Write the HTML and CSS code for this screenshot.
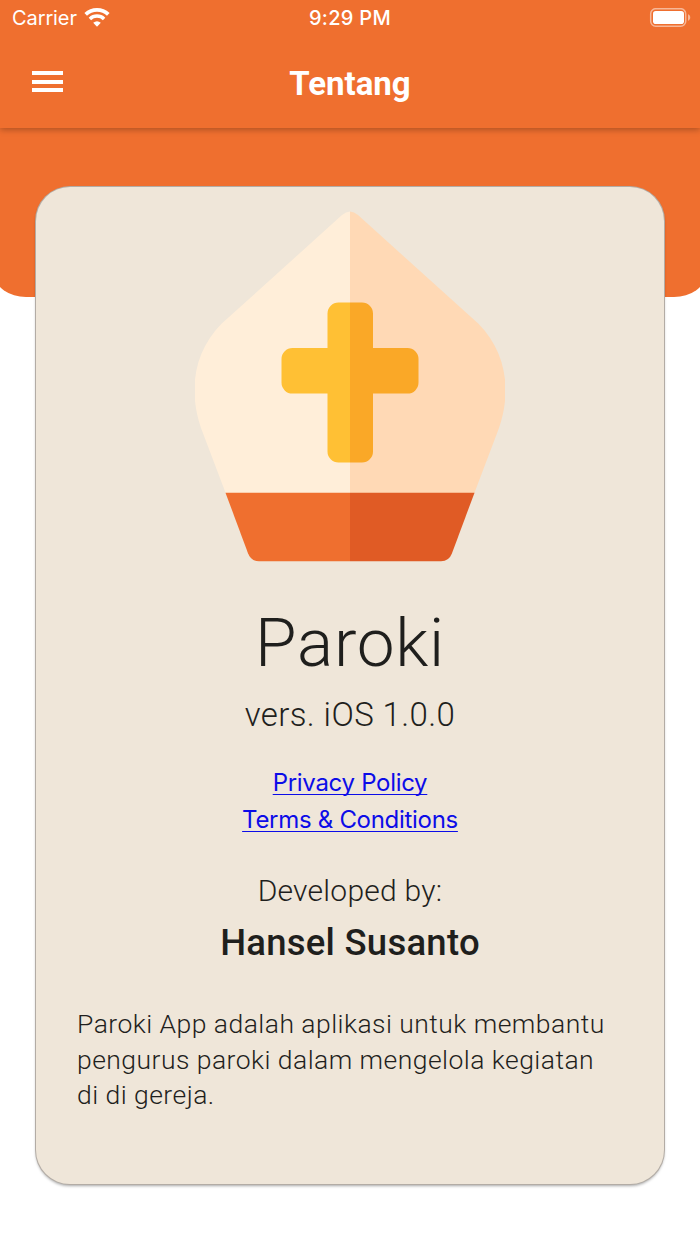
FILE: index.html
```
<!DOCTYPE html>
<html lang="id">
<head>
    <meta charset="UTF-8">
    <title>Tentang</title>
    <link rel="stylesheet" href="styles.css">
</head>
<body>
<div class="page">
    <div class="hero"></div>
    <header class="header">
        <div class="status">
            <div class="carrier">
                <span>Carrier</span>
                <svg class="wifi" width="26" height="20" viewBox="0 0 26 20">
                    <path d="M1.700 6.400a16.500 16.500 0 0 1 22.600 0" fill="none" stroke="#fff" stroke-width="3.8"/>
                    <path d="M5.900 10.900a10.300 10.300 0 0 1 14.200 0" fill="none" stroke="#fff" stroke-width="3.500"/>
                    <path d="M9.200 14.800a5.800 5.800 0 0 1 7.600 0L13 18.700z" fill="#fff"/>
                </svg>
            </div>
            <span class="time">9:29 PM</span>
            <svg class="battery" width="42" height="20" viewBox="0 0 42 20">
                <rect x="1.700" y=".7" width="35" height="17.500" rx="5" fill="none" stroke="#fff" stroke-opacity=".5" stroke-width="1.5"/>
                <rect x="4" y="3" width="31" height="13" rx="2.8" fill="#fff"/>
                <path d="M39 6.300c3 1 3 5.400 0 6.400z" fill="#fff" fill-opacity=".5"/>
            </svg>
        </div>
        <div class="navbar">
            <div class="menu"><i></i><i></i><i></i></div>
            <h1>Tentang</h1>
        </div>
    </header>
    <main class="card">
        <svg class="logo" width="310" height="352" viewBox="195 210 310 352">
            <path d="M350 211.500q-4 0-8 3.600L229 317C195 345 187 387 201 428L226 494H350z" fill="#ffeed9"/>
            <path d="M350 211.500q4 0 8 3.600L471 317C505 345 513 387 499 428L474 494H350z" fill="#ffd9b5"/>
            <path d="M225.500 492.700H350V561.300H259q-8 0-11-8z" fill="#ef6f2f"/>
            <path d="M474.500 492.700H350V561.300H441q8 0 11-8z" fill="#e05b25"/>
            <path d="M350 302.500H338.500a11 11 0 0 0-11 11V348H292.500a11 11 0 0 0-11 11V382.600a11 11 0 0 0 11 11H327.500V451.500a11 11 0 0 0 11 11H350z" fill="#ffc034"/>
            <path d="M350 302.500H362a11 11 0 0 1 11 11V348H407.500a11 11 0 0 1 11 11V382.600a11 11 0 0 1-11 11H373V451.500a11 11 0 0 1-11 11H350z" fill="#faa827"/>
        </svg>
        <h2 class="name">Paroki</h2>
        <p class="version">vers. iOS 1.0.0</p>
        <div class="links">
            <a href="#">Privacy Policy</a>
            <a href="#">Terms &amp; Conditions</a>
        </div>
        <p class="by">Developed by:</p>
        <p class="author">Hansel Susanto</p>
        <p class="about">Paroki App adalah aplikasi untuk membantu<br>pengurus paroki dalam mengelola kegiatan<br>di di gereja.</p>
    </main>
</div>
</body>
</html>
```
FILE: styles.css
```
* {
    margin: 0;
    padding: 0;
    box-sizing: border-box;
}
body {
    background: #fff;
    color: #1f1f1d;
    font-family: Roboto, "Liberation Sans", sans-serif;
}
.page {
    position: relative;
    height: 1244px;
    overflow: hidden;
}
/* orange backdrop behind the card */
.hero {
    position: absolute;
    top: 0;
    left: -5px;
    right: -5px;
    height: 297px;
    background: #ef6f2f;
    border-radius: 0 0 31px 31px / 0 0 22px 22px;
}
.header {
    position: relative;
    height: 128px;
    color: #fff;
    background: #ef6f2f;
    box-shadow: 0 2px 6px rgba(0, 0, 0, .26);
}
.status {
    display: grid;
    grid-template-columns: 1fr auto 1fr;
    align-items: center;
    height: 36px;
    padding: 0 9px 0 12px;
    font-family: Inter, "Liberation Sans", sans-serif;
    font-size: 20px;
    line-height: 36px;
}
.carrier {
    display: flex;
    align-items: center;
    gap: 7px;
    letter-spacing: -.1px;
}
.time {
    margin-right: 3px;
    font-weight: 500;
    letter-spacing: .3px;
}
.battery {
    justify-self: end;
}
.navbar {
    display: grid;
    grid-template-columns: 1fr auto 1fr;
    align-items: center;
    height: 92px;
    padding: 0 32px;
}
.menu {
    display: flex;
    flex-direction: column;
    gap: 4.5px;
    width: 31px;
    padding-bottom: 1px;
}
.menu i {
    height: 4px;
    background: #fff;
}
h1 {
    padding-top: 3px;
    font-size: 33px;
    font-weight: 700;
    line-height: 40px;
}
.card {
    position: relative;
    display: flex;
    flex-direction: column;
    align-items: center;
    width: 628px;
    height: 997px;
    margin: 59px auto 0;
    padding: 23px 41px 0;
    background: #efe6d9;
    border-radius: 34px;
    box-shadow: 0 0 0 1px #b3aca5, 0 2px 3px rgba(0, 0, 0, .35);
}
.name {
    margin-top: 41px;
    font-size: 67.5px;
    font-weight: 350;
    letter-spacing: .7px;
    line-height: 80px;
}
.version {
    margin-top: 12px;
    font-size: 33px;
    font-weight: 350;
    letter-spacing: .4px;
    line-height: 40px;
}
.links {
    display: flex;
    flex-direction: column;
    align-items: center;
    margin-top: 29px;
    font-family: Inter, "Liberation Sans", sans-serif;
    font-size: 24px;
    letter-spacing: -.3px;
    line-height: 37px;
}
.links a {
    color: #0c0ce8;
    text-decoration: underline;
    text-decoration-thickness: 1px;
    text-decoration-skip-ink: none;
    text-underline-offset: 3px;
}
.by {
    margin-top: 33px;
    font-size: 30px;
    font-weight: 350;
    letter-spacing: .25px;
    line-height: 40px;
}
.author {
    margin-top: 7px;
    font-size: 36.5px;
    font-weight: 500;
    letter-spacing: .25px;
    line-height: 50px;
}
.about {
    align-self: flex-start;
    margin-top: 38px;
    font-size: 26.5px;
    font-weight: 350;
    letter-spacing: .46px;
    line-height: 35.5px;
    white-space: nowrap;
}
```
